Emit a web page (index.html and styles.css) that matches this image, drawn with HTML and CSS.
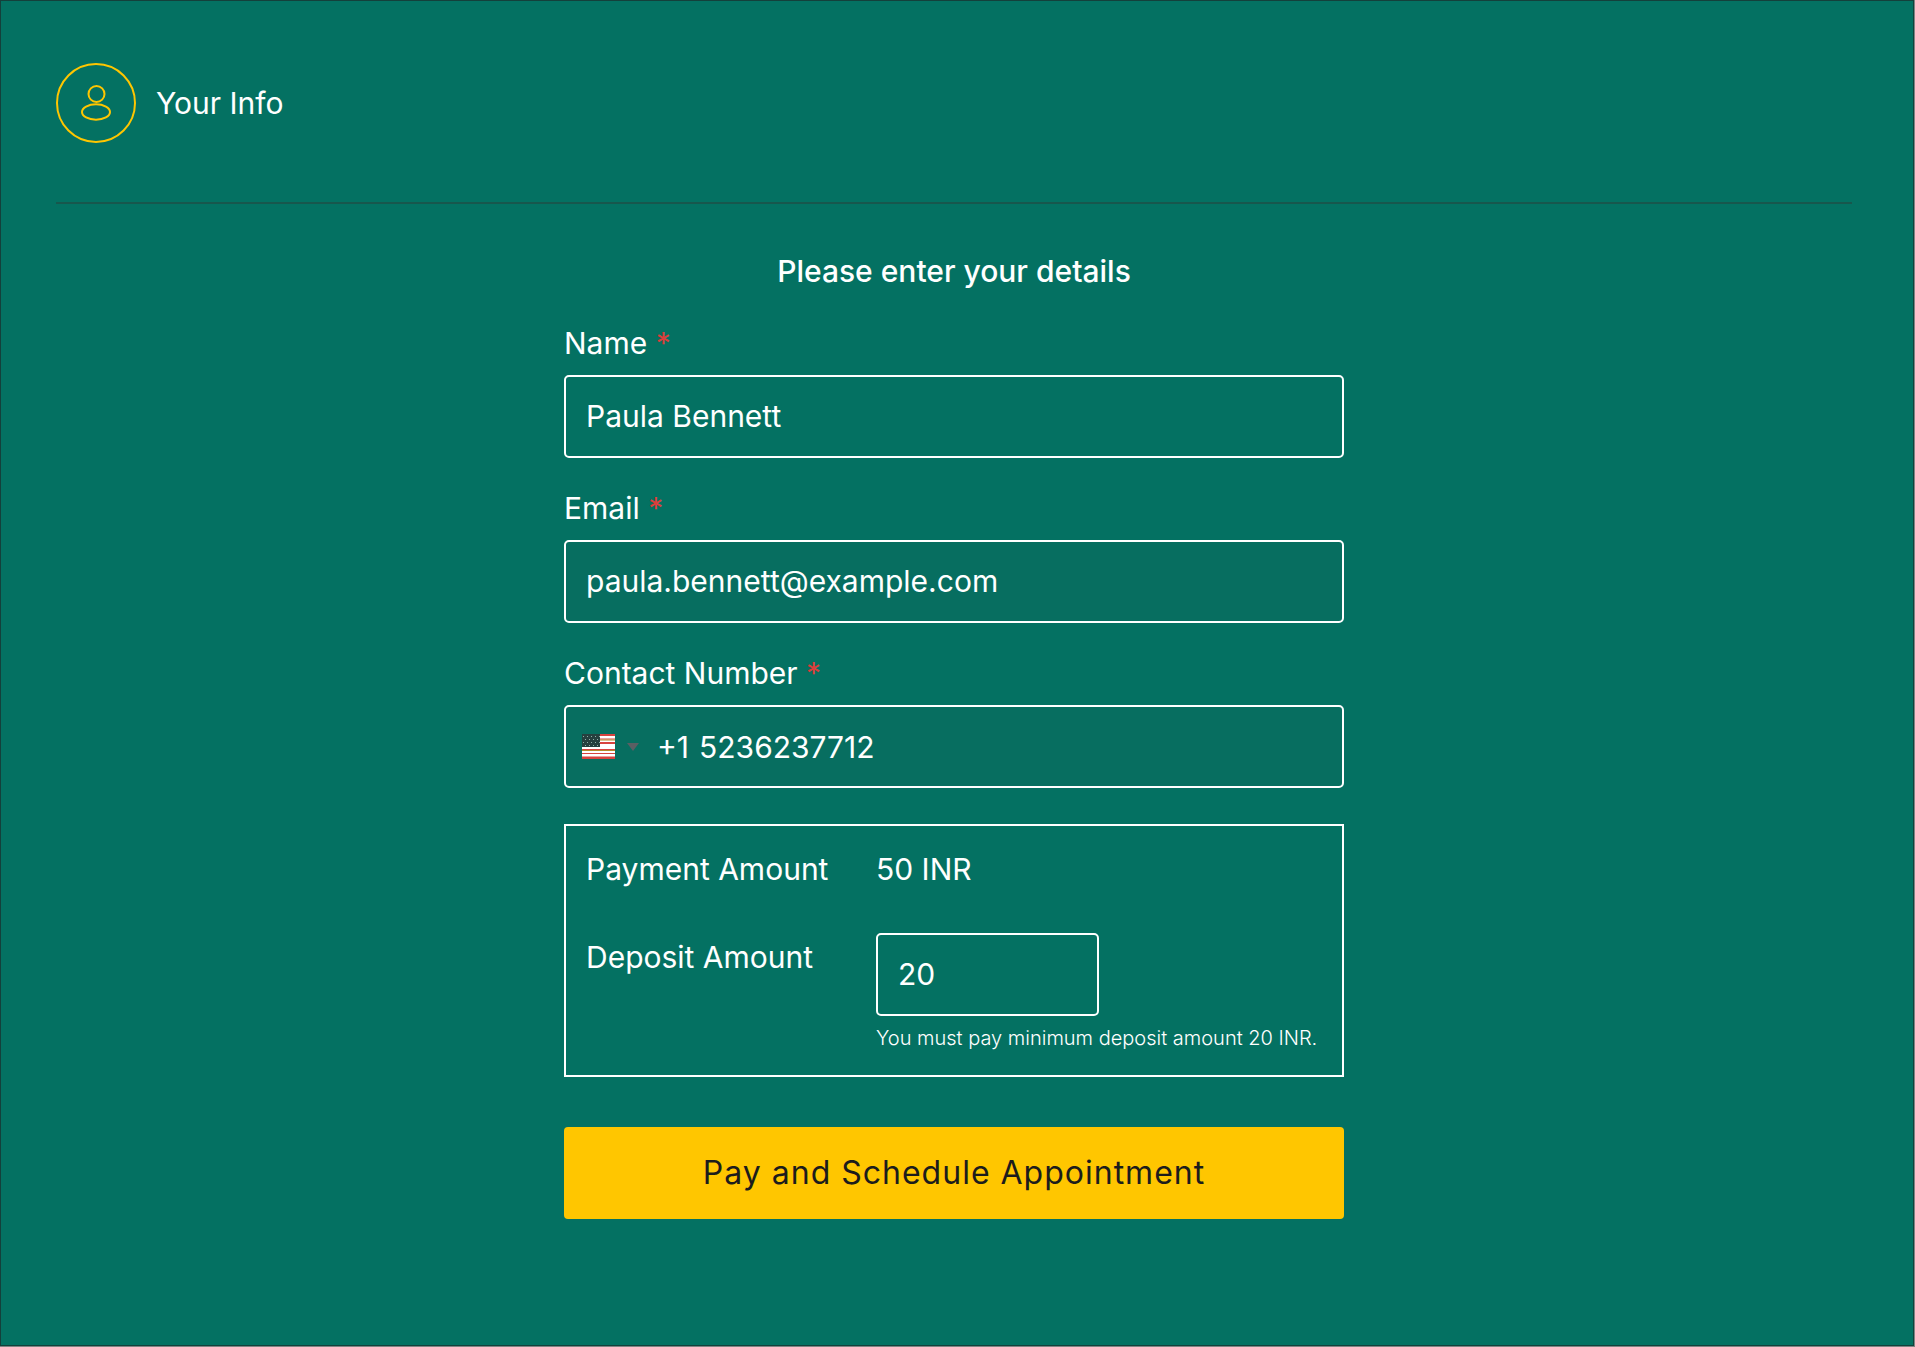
FILE: index.html
```html
<!DOCTYPE html>
<html lang="en">
<head>
    <meta charset="UTF-8">
    <meta name="viewport" content="width=device-width, initial-scale=1.0">
    <title>Your Info</title>
    <link rel="stylesheet" href="styles.css">
</head>
<body>
    <div class="page">
        <header class="step-header">
            <span class="step-icon">
                <svg width="30" height="36" viewBox="0 0 30 36" fill="none" stroke="currentColor" stroke-width="2" aria-hidden="true">
                    <circle cx="15.5" cy="9" r="8"/>
                    <ellipse cx="15" cy="27" rx="14" ry="7.7"/>
                </svg>
            </span>
            <h1 class="step-title">Your Info</h1>
        </header>
        <main>
            <form class="details-form">
                <h2 class="form-title">Please enter your details</h2>

                <div class="field">
                    <label for="name">Name <span class="required">*</span></label>
                    <input class="text-input" type="text" id="name" value="Paula Bennett" required>
                </div>

                <div class="field">
                    <label for="email">Email <span class="required">*</span></label>
                    <input class="text-input filled" type="email" id="email" value="paula.bennett@example.com" required>
                </div>

                <div class="field">
                    <label for="phone">Contact Number <span class="required">*</span></label>
                    <div class="phone-box filled">
                        <button class="country" type="button" aria-label="Country code">
                            <svg class="flag" width="33" height="25" viewBox="0 0 33 25" aria-hidden="true">
                                <rect width="33" height="25" fill="#fff"/>
                                <path d="M0 1h33M0 9h33M0 23.5h33" stroke="#d8433f" stroke-width="2"/>
                                <path d="M0 5h33M0 15.5h33M0 19.5h33" stroke="#d8433f" stroke-width="1"/>
                                <path d="M0 6h33M0 16.5h33" stroke="#b58a2a" stroke-width="1"/>
                                <path d="M0 24h33" stroke="#d8433f" stroke-width="2"/>
                                <rect width="18" height="13" fill="#26403f"/>
                                <path d="M1 2.5h17M3 5.5h15M1 8.5h17M3 11.5h15" stroke="#8fb0a8" stroke-width="1" stroke-dasharray="1 3"/>
                            </svg>
                            <svg width="12" height="8" viewBox="0 0 12 8" aria-hidden="true">
                                <path d="M0 0h12L6 8z" fill="#5a5f63"/>
                            </svg>
                        </button>
                        <span class="dial-code">+1</span>
                        <input class="phone-input" type="tel" id="phone" value="5236237712" required>
                    </div>
                </div>

                <div class="payment">
                    <span>Payment Amount</span>
                    <span>50 INR</span>
                    <label class="deposit-label" for="deposit">Deposit Amount</label>
                    <div class="deposit">
                        <input class="text-input deposit-input" type="text" inputmode="numeric" id="deposit" value="20">
                        <small class="deposit-note">You must pay minimum deposit amount 20 INR.</small>
                    </div>
                </div>

                <button class="submit" type="submit">Pay and Schedule Appointment</button>
            </form>
        </main>
    </div>
</body>
</html>
```

FILE: styles.css
```css
* {
    box-sizing: border-box;
}
body {
    margin: 0;
    background-color: #7d8583;
    color: #fff;
    font-family: Inter, "Liberation Sans", sans-serif;
    font-size: 30px;
    line-height: 40px;
}
input,
button {
    font: inherit;
    color: inherit;
}
.page {
    min-height: calc(100vh - 1px);
    margin: 0 1px 1px 0;
    padding: 62px 61px 62px 55px;
    border: 1px solid #14403b;
    background-color: #047162;
}
.step-header {
    display: flex;
    align-items: center;
    gap: 20px;
    padding-bottom: 59px;
    border-bottom: 2px solid #17574d;
}
.step-icon {
    display: flex;
    align-items: center;
    justify-content: center;
    width: 80px;
    height: 80px;
    border: 2px solid #ffc600;
    border-radius: 50%;
    color: #ffc600;
}
.step-title {
    margin: 0;
    font-size: 30px;
    font-weight: 400;
}
.details-form {
    display: flex;
    flex-direction: column;
    max-width: 780px;
    margin: 0 auto;
    padding-top: 47px;
}
.form-title {
    margin: 0 0 32px;
    font-size: 30px;
    font-weight: 500;
    text-align: center;
}
.field {
    display: flex;
    flex-direction: column;
    gap: 12px;
    margin-bottom: 30px;
}
.required {
    color: #dc3e3b;
}
.text-input,
.phone-box {
    width: 100%;
    height: 83px;
    border: 2px solid #fff;
    border-radius: 5px;
    background-color: transparent;
}
.text-input {
    padding: 0 20px 2px;
}
.text-input.filled,
.phone-box.filled {
    background-color: #076e60;
}
.phone-box {
    display: flex;
    align-items: center;
    padding: 0 16px;
}
.country {
    display: flex;
    align-items: center;
    gap: 12px;
    padding: 0;
    border: 0;
    background: none;
}
.dial-code {
    margin: 0 10px 0 18px;
}
.phone-input {
    flex: 1;
    min-width: 0;
    padding: 0;
    border: 0;
    background: none;
}
.payment {
    display: grid;
    grid-template-columns: 270px 1fr;
    column-gap: 20px;
    row-gap: 44px;
    margin-top: 6px;
    padding: 23px 20px;
    border: 2px solid #fff;
}
.deposit-label {
    padding-top: 4px;
}
.deposit {
    display: flex;
    flex-direction: column;
    gap: 8px;
}
.deposit-input {
    width: 223px;
}
.deposit-note {
    font-size: 20px;
    font-weight: 300;
    line-height: 28px;
}
.submit {
    height: 92px;
    margin-top: 50px;
    border: 0;
    border-radius: 4px;
    background-color: #ffc600;
    color: #1c1c1c;
    font-size: 32px;
    letter-spacing: 1px;
}
```
